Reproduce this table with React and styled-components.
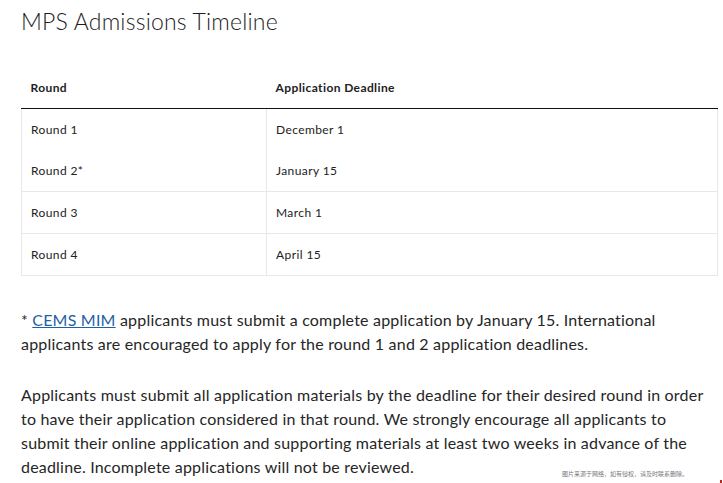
import React from 'react';
import styled, { createGlobalStyle } from 'styled-components';

const GlobalStyle = createGlobalStyle`
  body {
    margin: 0;
    background: #fff;
    font-family: Lato, "Noto Sans", sans-serif;
    color: #222;
  }
`;

const Page = styled.div`
  position: relative;
  width: 723px;
  height: 483px;
  padding: 0 5px 0 21px;
  box-sizing: border-box;
  overflow: hidden;
`;

const Title = styled.h2`
  margin: 0;
  padding-top: 7px;
  font-size: 23px;
  font-weight: 300;
  letter-spacing: 0.2px;
  line-height: 28px;
  color: #1d1d1d;
`;

const Table = styled.table`
  width: 697px;
  margin-top: 31px;
  border-collapse: collapse;
  font-size: 12px;
  letter-spacing: 0.4px;
`;

const HeadCell = styled.th`
  text-align: left;
  font-weight: 700;
  height: 42px;
  padding: 0 9px;
  border-bottom: 1px solid #111;
  width: ${(p) => p.$w || 'auto'};
`;

const Row = styled.tr`
  border-bottom: ${(p) => (p.$split ? '1px solid #e8e8e8' : 'none')};
`;

const Cell = styled.td`
  height: 41px;
  padding: 0 9px;
  border-left: 1px solid #e8e8e8;
  border-right: 1px solid #e8e8e8;
`;

const Notes = styled.div`
  margin-top: 32px;
  width: 692px;
`;

const Note = styled.p`
  margin: 0;
  font-size: 16px;
  line-height: 24px;
  letter-spacing: 0.2px;
  color: #262626;
  & + & {
    margin-top: 27px;
  }
`;

const Link = styled.a`
  color: #1f5fa6;
  text-decoration: underline;
`;

const Watermark = styled.span`
  position: absolute;
  right: 35px;
  bottom: 5px;
  font-family: "Noto Sans CJK SC", sans-serif;
  font-size: 6px;
  color: #777;
`;

const Mark = styled.span`
  position: absolute;
  right: 1px;
  bottom: 0;
  width: 2px;
  height: 3px;
  background: #c62020;
`;

const rounds = [
  { round: 'Round 1', date: 'December 1', split: false },
  { round: 'Round 2*', date: 'January 15', split: true },
  { round: 'Round 3', date: 'March 1', split: true },
  { round: 'Round 4', date: 'April 15', split: true },
];

const App = () => (
  <>
    <GlobalStyle />
    <Page>
      <Title>MPS Admissions Timeline</Title>
      <Table>
        <thead>
          <tr>
            <HeadCell $w="227px">Round</HeadCell>
            <HeadCell>Application Deadline</HeadCell>
          </tr>
        </thead>
        <tbody>
          {rounds.map((r) => (
            <Row key={r.round} $split={r.split}>
              <Cell>{r.round}</Cell>
              <Cell>{r.date}</Cell>
            </Row>
          ))}
        </tbody>
      </Table>
      <Notes>
        <Note>
          * <Link href="#">CEMS MIM</Link> applicants must submit a complete
          application by January 15. International applicants are encouraged
          to apply for the round 1 and 2 application deadlines.
        </Note>
        <Note>
          Applicants must submit all application materials by the deadline for
          their desired round in order to have their application considered in
          that round. We strongly encourage all applicants to submit their
          online application and supporting materials at least two weeks in
          advance of the deadline. Incomplete applications will not be
          reviewed.
        </Note>
      </Notes>
      <Watermark>图片来源于网络，如有侵权，请及时联系删除。</Watermark>
      <Mark />
    </Page>
  </>
);

export default App;
